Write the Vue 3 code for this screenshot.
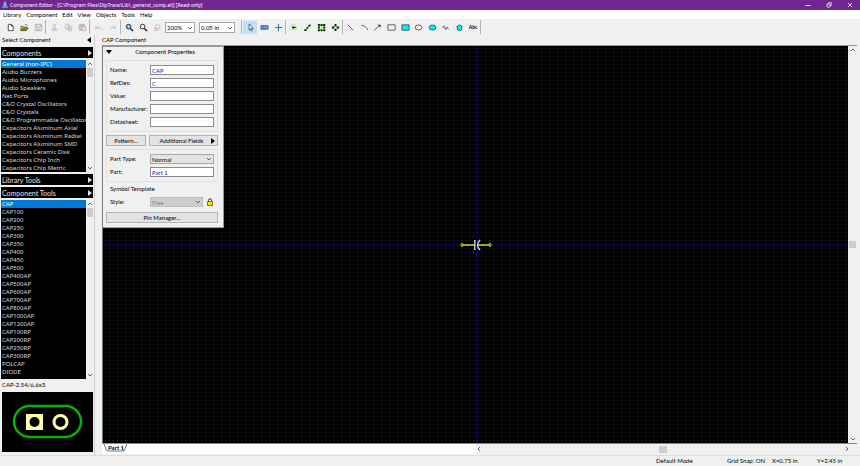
<script setup>
import { ref } from 'vue'

const menus = ['Library', 'Component', 'Edit', 'View', 'Objects', 'Tools', 'Help']
const libraries = [
  'General (non-IPC)', 'Audio Buzzers', 'Audio Microphones', 'Audio Speakers', 'Net Ports',
  'C&O Crystal Oscillators', 'C&O Crystals', 'C&O Programmable Oscillators',
  'Capacitors Aluminum Axial', 'Capacitors Aluminum Radial', 'Capacitors Aluminum SMD',
  'Capacitors Ceramic Disk', 'Capacitors Chip Inch', 'Capacitors Chip Metric'
]
const components = [
  'CAP', 'CAP100', 'CAP200', 'CAP250', 'CAP300', 'CAP350', 'CAP400', 'CAP450', 'CAP500',
  'CAP400AP', 'CAP500AP', 'CAP600AP', 'CAP700AP', 'CAP800AP', 'CAP1000AP', 'CAP1200AP',
  'CAP100RP', 'CAP200RP', 'CAP250RP', 'CAP300RP', 'POLCAP', 'DIODE'
]
const fields = ref([
  { id: 'name', label: 'Name:', value: 'CAP' },
  { id: 'refdes', label: 'RefDes:', value: 'C' },
  { id: 'value', label: 'Value:', value: '' },
  { id: 'maker', label: 'Manufacturer:', value: '' },
  { id: 'sheet', label: 'Datasheet:', value: '' }
])
const part = ref('Part 1')
const library = ref(0)
const component = ref(0)
</script>

<template>
  <div class="app">
    <header class="title">
      <svg class="logo" viewBox="0 0 8 8"><path d="M4 0v2M3 2h2v3H3z" stroke="#9fd0f5" fill="#5aa7e8" stroke-width=".7" /><path d="M1 5h6v2H1z" fill="#4c93e0" /></svg>
      <span class="title-text">Component Editor - [C:\Program Files\DipTrace\Lib\_general_comp.eli] [Read-only]</span>
      <button class="win" aria-label="Minimize"><svg viewBox="0 0 8 8"><path d="M1.500 4.500h5" stroke="#fff" stroke-width=".8" /></svg></button>
      <button class="win" aria-label="Restore"><svg viewBox="0 0 8 8"><path d="M2 3h3v3H2zM3.300 3V1.700h3v3H5" stroke="#fff" fill="none" stroke-width=".7" /></svg></button>
      <button class="win" aria-label="Close"><svg viewBox="0 0 8 8"><path d="M2 2l4 4M6 2L2 6" stroke="#fff" stroke-width=".8" /></svg></button>
    </header>

    <nav class="menu"><button v-for="m in menus" :key="m">{{ m }}</button></nav>

    <div class="toolbar">
      <div class="group three">
        <button aria-label="New"><svg viewBox="0 0 10 10"><path d="M2.500 1.500h3.500l2 2v5h-5.500zM6 1.500v2h2" fill="#fff" stroke="#333" stroke-width=".9" /></svg></button>
        <button aria-label="Open"><svg viewBox="0 0 10 10"><path d="M1 8.500V3.500h2.500l1 1h3V6" fill="#e8d820" stroke="#4a4a00" stroke-width=".7" /><path d="M1 8.500l2-3h6l-2 3z" fill="#8a8a10" stroke="#3d3d00" stroke-width=".7" /><path d="M5.500 2q2-1 3 .8" fill="none" stroke="#333" stroke-width=".7" /></svg></button>
        <button aria-label="Save" class="dim"><svg viewBox="0 0 10 10"><path d="M1.500 1.500h7v7h-7zM3 1.500v3h4v-3M3.500 8.500V6.500h3v2" fill="none" stroke="#888" /></svg></button>
      </div>
      <div class="group three">
        <button aria-label="Cut" class="dim"><svg viewBox="0 0 10 10"><path d="M3.500 1l2.500 5.500M6.500 1L4 6.500" stroke="#888" stroke-width=".8" /><circle cx="3.500" cy="7.500" r="1.200" fill="none" stroke="#888" stroke-width=".8" /><circle cx="6.500" cy="7.500" r="1.200" fill="none" stroke="#888" stroke-width=".8" /></svg></button>
        <button aria-label="Copy" class="dim"><svg viewBox="0 0 10 10"><path d="M1.500 1.500h4v5h-4zM4.500 3.500h4v5h-4zM5.500 5.500h2M5.500 7h2" fill="#eee" stroke="#888" stroke-width=".8" /></svg></button>
        <button aria-label="Paste" class="dim"><svg viewBox="0 0 10 10"><path d="M1.500 2h6v6h-6z" fill="#aaa" stroke="#888" /><path d="M4.500 4.500h4v4h-4zM3 1.500h3" fill="#eee" stroke="#888" /></svg></button>
      </div>
      <div class="group two">
        <button aria-label="Undo" class="dim"><svg viewBox="0 0 10 10"><path d="M2 3v3h3M2 5.500q3-3 6 .5v1" fill="none" stroke="#999" stroke-width=".9" /></svg></button>
        <button aria-label="Redo" class="dim"><svg viewBox="0 0 10 10"><path d="M8 3v3H5M8 5.500q-3-3-6 .5v1" fill="none" stroke="#999" stroke-width=".9" /></svg></button>
      </div>
      <div class="group zooms">
        <button aria-label="Zoom in"><svg viewBox="0 0 10 10"><circle cx="4" cy="4" r="2.600" fill="#6aa6dc" stroke="#16345c" /><path d="M6 6l3 3" stroke="#111" stroke-width="1.500" /><path d="M2.800 4h2.400M4 2.800v2.400" stroke="#fff" stroke-width=".6" /></svg></button>
        <button aria-label="Zoom out"><svg viewBox="0 0 10 10"><circle cx="4" cy="4" r="2.600" fill="#e8eef4" stroke="#222" /><path d="M6 6l3 3" stroke="#111" stroke-width="1.500" /></svg></button>
        <button aria-label="Zoom fit" class="dim"><svg viewBox="0 0 10 10"><circle cx="5" cy="4" r="2.400" fill="none" stroke="#888" stroke-width=".8" /><path d="M6.500 6l2 2M1 6h4M1 8h5" stroke="#888" /></svg></button>
        <span class="combo"><select aria-label="Zoom"><option>200%</option></select><svg viewBox="0 0 6 6"><path d="M1 2l2 2 2-2" /></svg></span>
        <span class="combo grid-step"><select aria-label="Grid step"><option>0.05 in</option></select><svg viewBox="0 0 6 6"><path d="M1 2l2 2 2-2" /></svg></span>
      </div>
      <div class="group three">
        <button aria-label="Select" class="on"><svg viewBox="0 0 10 10"><path d="M3.500 1v7l1.500-1.500 1 2.500 1-.5-1-2.300h2z" fill="#fff" stroke="#222" stroke-width=".7" /></svg></button>
        <button aria-label="Name label"><svg viewBox="0 0 10 10"><path d="M1 3h8v4H1z" fill="#3d7cc9" stroke="#1d4f96" stroke-width=".7" /><path d="M2 5h1.500M4.500 5h1M6.500 4.200h1.500M6.500 5.800h1.500" stroke="#d8eaff" stroke-width=".7" /></svg></button>
        <button aria-label="Origin"><svg viewBox="0 0 9 9"><path d="M4.500 1v7M1 4.500h7" stroke="#3569d4" /></svg></button>
      </div>
      <div class="group four">
        <button aria-label="Pin"><svg viewBox="0 0 10 10"><circle cx="5" cy="5" r="3.300" fill="#dff7d8" stroke="#9de08e" stroke-width=".7" /><circle cx="4.800" cy="5" r="1.400" fill="#0a3d08" /><path d="M5 5h3" stroke="#0a3d08" /></svg></button>
        <button aria-label="Pin line"><svg viewBox="0 0 10 10"><path d="M1.500 8.500l7-7" stroke="#4fbf45" /><path d="M1.500 7h2.500v2H1.500zM4 4.500h2v2H4zM6 2h2.500v2H6z" fill="#0a260a" /></svg></button>
        <button aria-label="Pin matrix"><svg viewBox="0 0 10 10"><path d="M1.500 1.500h7v7h-7z" fill="#bdf2b0" /><path d="M1 1h2.200v2.200H1zM4 1h2.200v2.200H4zM7 1h2.200v2.200H7zM1 4h2.200v2.200H1zM7 4h2.200v2.200H7zM1 7h2.200v2.200H1zM4 7h2.200v2.200H4zM7 7h2.200v2.200H7z" fill="#0a260a" /></svg></button>
        <button aria-label="Pin circle"><svg viewBox="0 0 10 10"><path d="M5 2l3 3-3 3-3-3z" fill="#bdf2b0" stroke="#4fbf45" /><path d="M4 1h2v2.500H4zM4 6.500h2V9H4zM1 4h2.500v2H1zM6.500 4H9v2H6.500z" fill="#0a260a" /></svg></button>
      </div>
      <div class="group ten">
        <button aria-label="Line"><svg viewBox="0 0 10 10"><path d="M2 2l6 6" class="ink" /></svg></button>
        <button aria-label="Arc"><svg viewBox="0 0 10 10"><path d="M1.500 2.500q5 0 7 5.500" class="ink" /></svg></button>
        <button aria-label="Arrow"><svg viewBox="0 0 10 10"><path d="M1.500 8l6-5.500" class="ink" /><path d="M5 2h3.500v3z" fill="#222" /></svg></button>
        <button aria-label="Rectangle"><svg viewBox="0 0 10 10"><path d="M1 2h8v6H1z" class="ink" /></svg></button>
        <button aria-label="Filled rectangle"><svg viewBox="0 0 10 10"><path d="M1 2h8v6H1z" class="ink cyan" /></svg></button>
        <button aria-label="Ellipse"><svg viewBox="0 0 10 10"><ellipse cx="5" cy="5" rx="3.800" ry="2.800" class="ink" /></svg></button>
        <button aria-label="Filled ellipse"><svg viewBox="0 0 10 10"><ellipse cx="5" cy="5" rx="3.800" ry="2.800" class="ink cyan" /></svg></button>
        <button aria-label="Polyline"><svg viewBox="0 0 10 10"><path d="M1.500 5.500l1.800-2.500 2 4.500 1.500-3 1.700 2.500" class="ink" /></svg></button>
        <button aria-label="Polygon"><svg viewBox="0 0 10 10"><path d="M5 2l3 2-1 4H3L2 4z" class="ink cyan" /></svg></button>
        <button aria-label="Text" class="abc">Abc</button>
      </div>
    </div>

    <main class="work">
      <aside class="side">
        <h2 class="caption"><span>Select Component</span><i class="tri left"></i></h2>
        <button class="bar">Components<i class="tri right"></i></button>
        <div class="list libs">
          <ul role="listbox" aria-label="Libraries"><li v-for="(n, i) in libraries" :key="n" role="option" :aria-selected="i === library" :class="{ sel: i === library }" @click="library = i">{{ n }}</li></ul>
          <div class="vscroll"><svg viewBox="0 0 6 6"><path d="M1 4l2-2 2 2" /></svg><i class="thumb"></i><svg viewBox="0 0 6 6"><path d="M1 2l2 2 2-2" /></svg></div>
        </div>
        <button class="bar">Library Tools<i class="tri right"></i></button>
        <button class="bar">Component Tools<i class="tri right"></i></button>
        <div class="list comps">
          <ul role="listbox" aria-label="Components"><li v-for="(n, i) in components" :key="n" role="option" :aria-selected="i === component" :class="{ sel: i === component }" @click="component = i">{{ n }}</li></ul>
          <div class="vscroll"><svg viewBox="0 0 6 6"><path d="M1 4l2-2 2 2" /></svg><i class="thumb"></i><svg viewBox="0 0 6 6"><path d="M1 2l2 2 2-2" /></svg></div>
        </div>
        <p class="pattern">CAP-2.54/6.6x3</p>
        <svg class="preview" viewBox="0 0 91 60">
          <rect x="12" y="14" width="67" height="31" rx="15.500" fill="none" stroke="#00b800" stroke-width="2.400" />
          <path d="M24 22h17v16H24z" fill="#ffffa8" /><circle cx="32.500" cy="30" r="5" fill="#000" />
          <circle cx="58.500" cy="30" r="6.500" fill="#000" stroke="#ffffa8" stroke-width="3" />
        </svg>
      </aside>

      <section class="editor">
        <h2 class="caption">CAP Component</h2>
        <div class="canvas">
          <svg class="sheet" aria-hidden="true">
            <defs><pattern id="dots" width="4" height="4" patternUnits="userSpaceOnUse"><path d="M2 2h1v1H2z" fill="#333" /></pattern></defs>
            <rect width="100%" height="100%" fill="url(#dots)" />
            <rect x="50%" y="0" width="1" height="100%" fill="#0000a0" />
            <rect x="0" y="50%" width="100%" height="1" fill="#0000a0" />
          </svg>
          <svg class="symbol" viewBox="0 0 32 14">
            <path d="M1 7h14M18 7h13" stroke="#d8d800" stroke-width="1.300" />
            <path d="M1 5.500h2v3H1zM29 5.500h2v3h-2z" fill="#8c8c20" stroke="#c8c800" stroke-width=".5" />
            <path d="M14.800 2v10M20 2q-5 5 0 10" fill="none" stroke="#d8d8e8" stroke-width="1.300" />
          </svg>
          <form class="panel" @submit.prevent>
            <header class="panel-head"><i class="tri down"></i><span>Component Properties</span></header>
            <div class="box">
              <div v-for="f in fields" :key="f.id" class="row"><label :for="f.id">{{ f.label }}</label><input :id="f.id" v-model="f.value" type="text"></div>
            </div>
            <div class="pair"><button type="button">Pattern...</button><button type="button" class="more"><span>Additional Fields</span><i class="tri right"></i></button></div>
            <div class="box">
              <div class="row"><label for="ptype">Part Type:</label><span class="combo gray"><select id="ptype"><option>Normal</option></select><svg viewBox="0 0 6 6"><path d="M1 2l2 2 2-2" /></svg></span></div>
              <div class="row"><label for="part">Part:</label><input id="part" v-model="part" type="text"></div>
            </div>
            <fieldset class="tmpl">
              <legend>Symbol Template</legend>
              <div class="row"><label for="style">Style:</label><span class="combo off"><select id="style" disabled><option>Free</option></select><svg viewBox="0 0 6 6"><path d="M1 2l2 2 2-2" /></svg></span>
                <svg class="lock" viewBox="0 0 8 8"><path d="M2.500 4V2.300q0-1.500 1.500-1.500t1.500 1.500V4" fill="none" stroke="#333" /><path d="M1.500 3.500h5v4h-5z" fill="#f4e400" stroke="#4c4600" stroke-width=".7" /></svg></div>
            </fieldset>
            <button type="button" class="pins">Pin Manager...</button>
          </form>
        </div>
        <div class="vscroll main-v"><svg viewBox="0 0 6 6"><path d="M1 4l2-2 2 2" /></svg><i class="thumb"></i><svg viewBox="0 0 6 6"><path d="M1 2l2 2 2-2" /></svg></div>
        <div class="foot">
          <div class="tabs"><svg viewBox="0 0 26 9" aria-hidden="true"><path d="M2 0l3 7h17l3-7" fill="#fff" stroke="#555" stroke-width=".8" /></svg><button>Part 1</button></div>
          <div class="hscroll"><svg viewBox="0 0 6 6"><path d="M4 1L2 3l2 2" /></svg><i class="thumb"></i><svg viewBox="0 0 6 6"><path d="M2 1l2 2-2 2" /></svg></div>
        </div>
      </section>
    </main>

    <footer class="status"><span class="mode">Default Mode</span><span class="pos">Grid Snap: ON</span><span class="pos">X=0.75 in</span><span class="last">Y=2.45 in</span></footer>
  </div>
</template>

<style>
body { margin: 0; overflow: hidden; }
</style>

<style scoped>
* { box-sizing: border-box; margin: 0; padding: 0; }
.app { height: 100vh; display: flex; flex-direction: column; background: #f0f0f0; color: #000; font: 6px/8px Lato, "Open Sans", sans-serif; }
button, input, select { font: inherit; color: inherit; border: 0; background: none; border-radius: 0; outline: 0; }
h2 { font: inherit; }
i { display: block; flex: none; }
svg { display: block; flex: none; }

.title { display: flex; align-items: center; height: 10px; background: #6f278f; color: #fff; }
.logo { width: 8px; height: 8px; margin: 0 1px; }
.title-text { flex: 1; white-space: nowrap; font-size: 5px; font-family: "Noto Sans", sans-serif; }
.win { width: 21px; height: 10px; display: flex; justify-content: center; align-items: center; }
.win svg { width: 8px; height: 8px; }
.menu { display: flex; gap: 5px; height: 9px; padding: 0 3px; background: #fff; }
.menu button { line-height: 9px; }

.toolbar { display: flex; height: 16px; padding: 1px 3px; align-items: center; }
.group { display: flex; height: 14px; border-right: 1px solid #b4b4b4; margin-right: 1px; align-items: center; }
.group button { flex: 1; min-width: 0; height: 13px; display: flex; align-items: center; justify-content: center; }
.group button svg { width: 9px; height: 9px; }
.three { width: 43px; }
.two { width: 30px; }
.four { width: 56px; }
.ten { width: 137px; }
.zooms { width: 120px; padding-right: 6px; }
.dim { opacity: .6; }
.on { background: #bfe0f7; }
.ink { fill: none; stroke: #333; stroke-width: .8; }
.cyan { fill: #00f0f8; }
.group .abc { font-size: 5px; font-weight: 700; }
.combo { position: relative; display: flex; align-items: center; width: 30px; height: 11px; border: 1px solid #a8a8a8; background: #fff; }
.combo select { appearance: none; flex: 1; width: 100%; height: 9px; padding-left: 1px; line-height: 9px; }
.combo svg { position: absolute; right: 1px; top: 2px; width: 6px; height: 6px; pointer-events: none; }
.combo path, .vscroll path, .hscroll path { fill: none; stroke: #444; stroke-width: .8; }
.grid-step { width: 36px; margin-left: 4px; }

.work { flex: 1; min-height: 0; display: flex; }
.side { width: 95px; flex: none; display: flex; flex-direction: column; gap: 2px; padding: 0 1px 3px; border-right: 1px solid #d0d0d0; }
.caption { display: flex; align-items: center; justify-content: space-between; height: 10px; padding: 0 2px 0 1px; }
.tri { width: 0; height: 0; border: 3px solid transparent; }
.tri.left { border-right: 4px solid #000; border-left: 0; }
.tri.right { border-left: 4px solid currentColor; border-right: 0; }
.tri.down { border-top: 4px solid #000; border-bottom: 0; }
.bar { display: flex; align-items: center; justify-content: space-between; flex: none; height: 11px; padding: 0 1px; background: #000; color: #e4e4e4; font-size: 7px; }
.list { display: flex; background: #000; color: #d8d8d8; overflow: hidden; }
.list ul { flex: 1; min-width: 0; list-style: none; overflow: hidden; font-size: 6px; font-family: "Noto Sans", sans-serif; }
.list li { height: 8px; padding-left: 1px; white-space: nowrap; overflow: hidden; }
.list .sel { background: #0078d7; color: #fff; }
.libs { flex: none; height: 112px; }
.comps { flex: 1; min-height: 0; }
.vscroll { width: 7px; display: flex; flex-direction: column; background: #f0f0f0; padding: 1px 0; align-items: center; }
.vscroll svg, .hscroll svg { width: 6px; height: 6px; }
.thumb { background: #cdcdcd; }
.vscroll .thumb { width: 6px; height: 9px; margin: 1px 0 auto; }
.pattern { height: 9px; padding-left: 1px; }
.preview { width: 91px; height: 60px; margin-left: 1px; background: #000; }

.editor { flex: 1; min-width: 0; display: grid; grid-template: 11px minmax(0, 1fr) 11px / minmax(0, 1fr) 9px; margin: 0 3px 1px 7px; }
.editor .caption { grid-column: 1 / 3; height: 11px; padding-left: 0; border-bottom: 1px solid #999; }
.canvas { position: relative; display: flex; align-items: center; justify-content: center; border-left: 1px solid #777; background: #000; }
.sheet { position: absolute; inset: 0; width: 100%; height: 100%; }
.symbol { position: relative; width: 32px; height: 14px; }
.vscroll.main-v { width: 9px; }
.vscroll.main-v .thumb { width: 7px; height: 7px; margin: auto 0; }
.foot { grid-column: 1 / 3; display: flex; border-top: 1px solid #888; }
.tabs { flex: 1; position: relative; background: #fff; }
.tabs svg { width: 26px; height: 9px; }
.tabs button { position: absolute; left: 6px; top: 0; line-height: 7px; font-weight: 700; }
.hscroll { flex: 1; display: flex; align-items: center; padding-right: 7px; }
.hscroll .thumb { width: 8px; height: 7px; margin: 0 auto; }

.panel { position: absolute; left: 0; top: 0; width: 121px; padding: 0 5px 4px 3px; display: flex; flex-direction: column; gap: 3px; background: #f0f0f0; border: 1px solid #999; border-left: 0; }
.panel-head { display: flex; align-items: center; height: 10px; text-align: center; }
.panel-head span { flex: 1; }
.box { border: 1px solid #e2e2e2; padding: 4px 3px; display: flex; flex-direction: column; gap: 3px; }
.row { display: flex; align-items: center; height: 10px; }
.row label { width: 40px; flex: none; white-space: nowrap; }
.row input { width: 64px; height: 10px; padding: 0 1px; background: #fff; border: 1px solid #8c8c8c; color: #2020e0; line-height: 8px; }
.row .combo { width: 64px; height: 10px; }
.row .combo svg { top: 1px; }
.row .gray { background: #e4e4e4; }
.row .off { width: 53px; background: #ccc; border-color: #c0c0c0; color: #888; }
.off select { opacity: 1; }
.lock { width: 8px; height: 8px; margin-left: 3px; }
.pair { display: flex; gap: 3px; }
.pair button, .pins { height: 11px; border: 1px solid #b4b4b4; background: #e3e3e3; line-height: 9px; }
.pair button { width: 40px; }
.pair .more { flex: 1; display: flex; align-items: center; padding: 0 2px; }
.more span { flex: 1; }
.tmpl { border: 0; padding: 4px 4px 2px; }

.status { display: flex; height: 11px; line-height: 10px; justify-content: flex-end; border-top: 1px solid #ddd; white-space: nowrap; }
.mode { width: 71px; }
.pos { width: 45px; }
.last { width: 43px; }
</style>
